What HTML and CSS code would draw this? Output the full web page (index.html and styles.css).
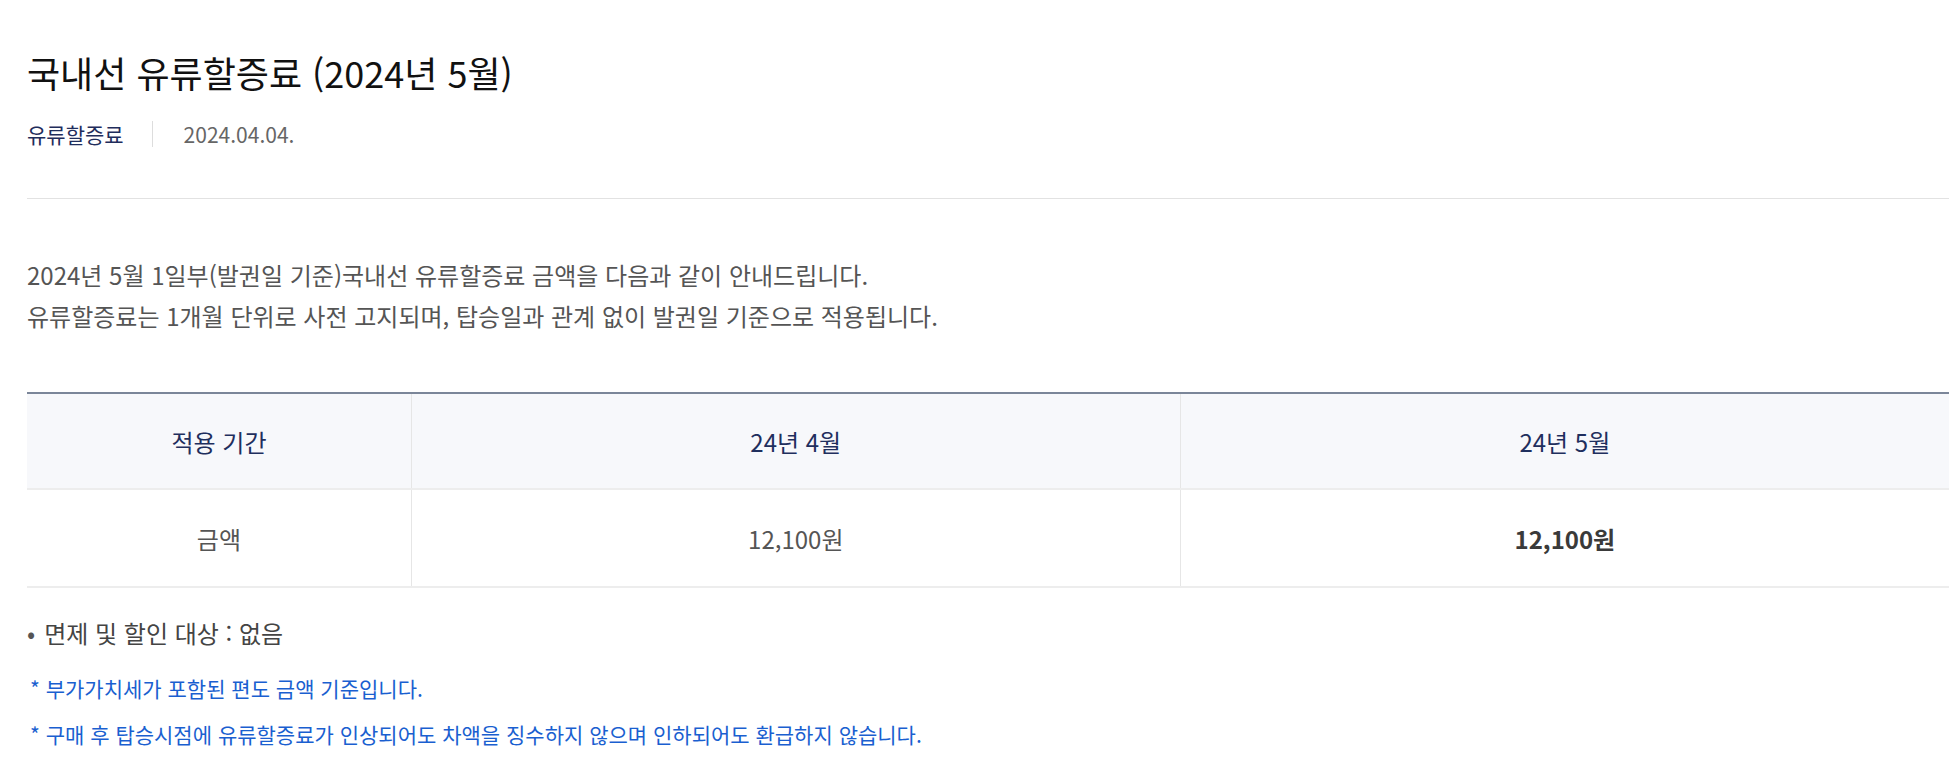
FILE: index.html
```html
<!DOCTYPE html>
<html lang="ko">
<head>
  <meta charset="UTF-8" />
  <title>국내선 유류할증료 (2024년 5월)</title>
  <link rel="stylesheet" href="styles.css">
</head>
<body>
  <div class="notice">
    <div class="notice-head">
      <h1 class="notice-title">국내선 유류할증료 (2024년 5월)</h1>
      <div class="notice-meta">
        <span class="category">유류할증료</span>
        <span class="date">2024.04.04.</span>
      </div>
    </div>

    <div class="notice-body">
      <p class="intro">
        2024년 5월 1일부(발권일 기준)국내선 유류할증료 금액을 다음과 같이 안내드립니다.<br>
        유류할증료는 1개월 단위로 사전 고지되며, 탑승일과 관계 없이 발권일 기준으로 적용됩니다.
      </p>

      <table class="fare-table">
        <colgroup>
          <col class="col-label">
          <col class="col-month">
          <col class="col-month">
        </colgroup>
        <thead>
          <tr>
            <th>적용 기간</th>
            <th>24년 4월</th>
            <th>24년 5월</th>
          </tr>
        </thead>
        <tbody>
          <tr>
            <td>금액</td>
            <td>12,100원</td>
            <td class="current">12,100원</td>
          </tr>
        </tbody>
      </table>

      <ul class="dot-list">
        <li>면제 및 할인 대상 : 없음</li>
      </ul>

      <p class="note">* 부가가치세가 포함된 편도 금액 기준입니다.</p>
      <p class="note">* 구매 후 탑승시점에 유류할증료가 인상되어도 차액을 징수하지 않으며 인하되어도 환급하지 않습니다.</p>
    </div>
  </div>
</body>
</html>
```

FILE: styles.css
```css
body {
  margin: 0;
  background: #fff;
  font-family: "Noto Sans CJK KR", "Noto Sans", sans-serif;
  color: #444;
}
.notice {
  padding: 0 4px 0 27px;
}
.notice-head {
  padding-top: 47px;
  padding-bottom: 49px;
  border-bottom: 1px solid #e2e2e2;
}
.notice-title {
  margin: 0;
  font-size: 36px;
  font-weight: 400;
  line-height: 50px;
  color: #111;
}
.notice-meta {
  display: flex;
  align-items: center;
  margin-top: 22px;
  font-size: 21px;
  line-height: 30px;
}
.notice-meta .category {
  color: #1f2d5c;
  padding-right: 28px;
  border-right: 1px solid #ddd;
  line-height: 26px;
}
.notice-meta .date {
  color: #666;
  padding-left: 31px;
}
.notice-body {
  padding-top: 55px;
}
.intro {
  margin: 0 0 56px;
  font-size: 24px;
  line-height: 41px;
  color: #555;
}
.fare-table {
  width: 100%;
  table-layout: fixed;
  border-collapse: collapse;
  border-top: 2px solid #7b8699;
  font-size: 24px;
}
.fare-table .col-label {
  width: 20%;
}
.fare-table .col-month {
  width: 40%;
}
.fare-table th {
  height: 94px;
  padding: 0;
  background: #f7f8fb;
  font-weight: 400;
  color: #1f2f5e;
  border-bottom: 2px solid #ededed;
}
.fare-table td {
  height: 96px;
  padding: 0;
  text-align: center;
  color: #555;
  border-bottom: 2px solid #ededed;
}
.fare-table th + th,
.fare-table td + td {
  border-left: 1px solid #e6e6e6;
}
.fare-table td.current {
  font-weight: 700;
  color: #3a3a3a;
}
.dot-list {
  list-style: none;
  margin: 30px 0 0;
  padding: 0;
  font-size: 24px;
  line-height: 30px;
  color: #444;
}
.dot-list li::before {
  content: "•";
  margin-right: 9px;
  color: #555;
}
.note {
  margin: 26px 0 0 3px;
  font-size: 21px;
  line-height: 28px;
  color: #1a5fd0;
}
.note + .note {
  margin-top: 18px;
}
```
